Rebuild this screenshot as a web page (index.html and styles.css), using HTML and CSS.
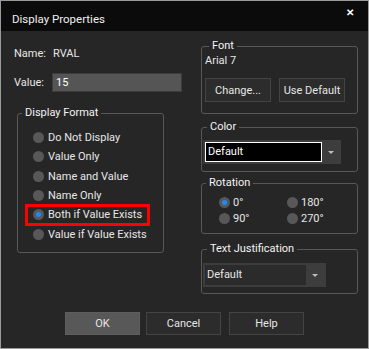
FILE: index.html
```html
<!DOCTYPE html>
<html>
<head>
<meta charset="utf-8">
<link rel="stylesheet" href="styles.css">
</head>
<body>
<div class="window">
  <div class="titlebar">
    <span class="title">Display Properties</span>
    <span class="close">&#x2715;</span>
  </div>
  <div class="content">
    <div class="left">
      <div class="row name-row"><span class="label">Name:</span><span class="name-val">RVAL</span></div>
      <div class="row value-row"><span class="label">Value:</span><div class="input">15</div></div>
      <fieldset class="group df">
        <legend>Display Format</legend>
        <div class="radios">
          <div class="radio-row"><span class="radio"></span><span>Do Not Display</span></div>
          <div class="radio-row"><span class="radio"></span><span>Value Only</span></div>
          <div class="radio-row"><span class="radio"></span><span>Name and Value</span></div>
          <div class="radio-row"><span class="radio"></span><span>Name Only</span></div>
          <div class="radio-row"><span class="hl"><span class="radio on"></span><span>Both if Value Exists</span></span></div>
          <div class="radio-row"><span class="radio"></span><span>Value if Value Exists</span></div>
        </div>
      </fieldset>
    </div>
    <div class="right">
      <fieldset class="group font">
        <legend>Font</legend>
        <div class="font-name">Arial 7</div>
        <div class="font-btns"><div class="btn small">Change...</div><div class="btn small">Use Default</div></div>
      </fieldset>
      <fieldset class="group color">
        <legend>Color</legend>
        <div class="combo color-combo"><div class="combo-box black">Default</div><div class="arrow"></div></div>
      </fieldset>
      <fieldset class="group rotation">
        <legend>Rotation</legend>
        <div class="rot-grid">
          <div class="radio-row"><span class="radio on"></span><span>0°</span></div>
          <div class="radio-row"><span class="radio"></span><span>180°</span></div>
          <div class="radio-row"><span class="radio"></span><span>90°</span></div>
          <div class="radio-row"><span class="radio"></span><span>270°</span></div>
        </div>
      </fieldset>
      <fieldset class="group just">
        <legend>Text Justification</legend>
        <div class="combo just-combo"><div class="combo-box dark">Default</div><div class="arrow"></div></div>
      </fieldset>
    </div>
  </div>
  <div class="footer">
    <div class="btn big default">OK</div>
    <div class="btn big cancel">Cancel</div>
    <div class="btn big help">Help</div>
  </div>
</div>
</body>
</html>
```
FILE: styles.css
```css
* { box-sizing: border-box; }
html, body { margin: 0; padding: 0; background: #262626; }
body { font-family: Roboto, "Liberation Sans", Arial, sans-serif; font-size: 11px; color: #e6e6e6; }
.window {
  width: 369px; height: 349px;
  border: 1px solid #9a9a9a;
  background: #262626;
  display: flex; flex-direction: column;
}
.titlebar {
  height: 30px; background: #0b0b0b;
  display: flex; align-items: center; justify-content: space-between;
  padding: 0 14px 0 11px;
}
.title { font-family: Roboto, sans-serif; font-size: 11.5px; color: #f0f0f0; margin-top: 5px; }
.close { font-size: 10px; font-weight: bold; color: #fff; margin-top: -7px; }
.content { display: flex; height: 270px; }
.left { width: 187px; padding-left: 13px; padding-top: 14px; }
.right { width: 157px; margin-left: 13px; }
.row { display: flex; align-items: center; }
.label { width: 38px; }
.name-row { height: 16px; }
.name-val { margin-left: 1px; }
.value-row { margin-top: 12px; height: 19px; }
.input {
  width: 130px; height: 19px; background: #555555; border: 1px solid #3c3c3c;
  color: #fff; padding-left: 3px; line-height: 17px;
}
.group {
  margin: 0; padding: 0; border: 1px solid #585858; border-radius: 3px;
}
.group legend { padding: 0 3px; margin-left: 4px; line-height: 16px; color: #f4f4f4; }
.df { margin-top: 13px; margin-left: 3px; width: 147px; height: 148px; }
.radios { padding: 7px 0 0 15px; }
.radio-row { display: flex; align-items: center; height: 19.3px; }
.radio-row span + span { margin-left: 4px; }
.radio { width: 11px; height: 11px; border-radius: 50%; background: #585858; flex: none; position: relative; }
.radio.on::after {
  content: ""; position: absolute; left: 3px; top: 3px; width: 5px; height: 5px; border-radius: 50%; background: #1a8cff;
}
.hl {
  display: inline-flex; align-items: center; height: 16px;
  margin-left: -5px; padding: 0 5px 0 5px;
  outline: 3px solid #ff0000; outline-offset: 0;
}
.font { margin-top: 7px; height: 76px; padding: 0 3px; }
.font-name { line-height: 14px; }
.font-btns { display: flex; gap: 8px; margin-top: 10px; }
.btn {
  background: #2c2c2c; border: 1px solid #444; color: #e6e6e6;
  display: flex; align-items: center; justify-content: center;
}
.btn.small { width: 66px; height: 24px; }
.color { margin-top: 5px; height: 53px; padding: 0 0 0 1px; }
.combo { display: flex; background: #3d3d3d; height: 24px; padding: 2px; margin-top: 5px; }
.combo-box { height: 20px; line-height: 18px; padding-left: 2px; }
.combo-box.black { width: 117px; background: #000; border: 1px solid #fff; color: #fff; }
.combo-box.dark { width: 101px; background: #2b2b2b; color: #e6e6e6; line-height: 20px; }
.color-combo { width: 138px; }
.just-combo { width: 123px; margin-top: 6px; }
.arrow { flex: 1; display: flex; align-items: center; justify-content: center; }
.arrow::after { content: ""; border-left: 3px solid transparent; border-right: 3px solid transparent; border-top: 3px solid #bdbdbd; }
.rotation { margin-top: 3px; height: 59px; }
.rot-grid { display: grid; grid-template-columns: 68px 68px; padding: 3px 0 0 17px; }
.rot-grid .radio-row { height: 16px; }
.rot-grid .radio-row span + span { margin-left: 3px; }
.just { margin-top: 7px; height: 53px; padding-left: 1px; }
.footer { display: flex; padding-left: 64px; padding-top: 11px; }
.btn.big { width: 75px; height: 23px; }
.btn.cancel { margin-left: 6px; }
.btn.help { margin-left: 8px; }
.btn.default { background: #585858; border-color: #5e5e5e; }
```
